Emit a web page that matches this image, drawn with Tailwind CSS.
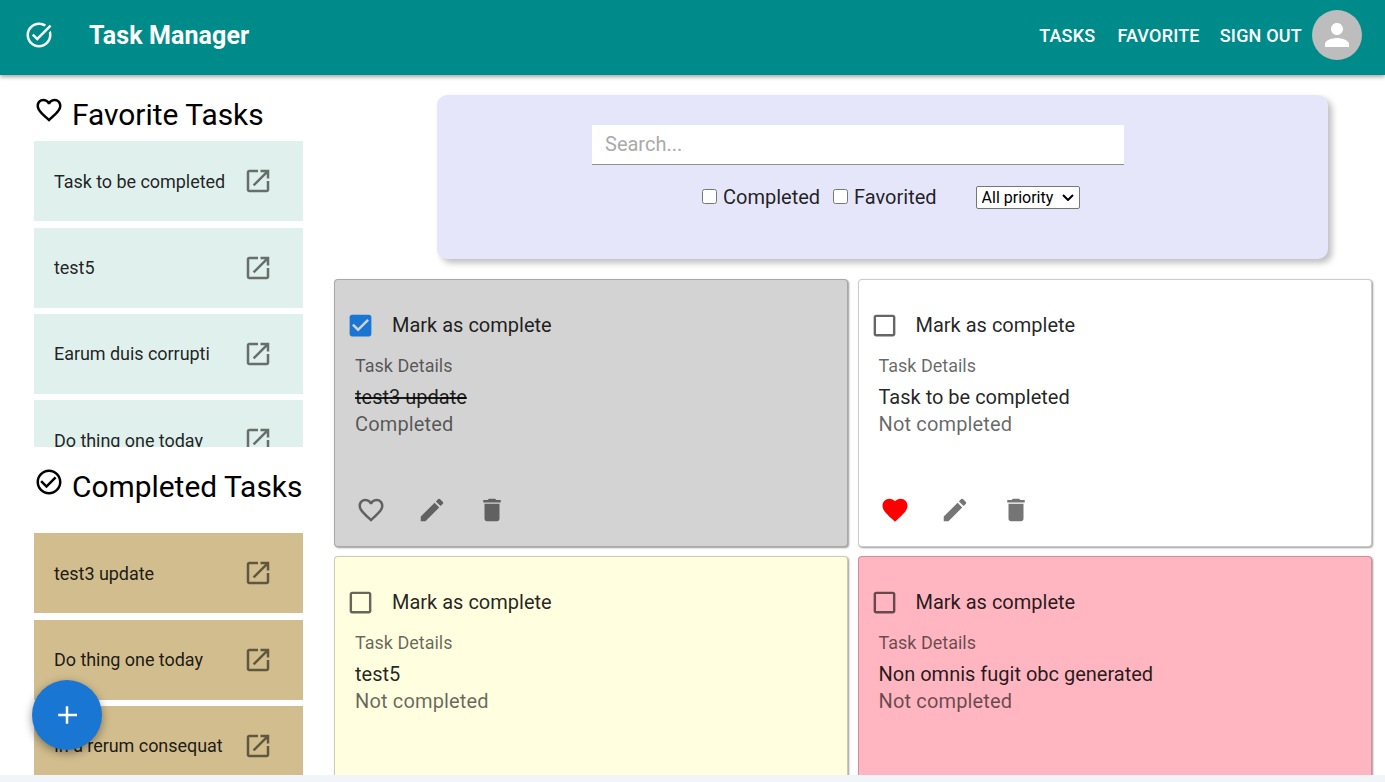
<!DOCTYPE html>
<html lang="en">
<head>
<meta charset="UTF-8">
<meta name="viewport" content="width=device-width, initial-scale=1.0">
<title>Task Manager</title>
<script src="https://cdn.jsdelivr.net/npm/@tailwindcss/browser@4"></script>
</head>
<body class="h-[782px] overflow-hidden bg-[#f1f4f9] font-['Roboto',sans-serif] text-black/87">

<!-- top bar -->
<header class="relative z-10 flex h-[75px] items-center bg-[#008b8b] pb-[5px] pl-[24px] pr-[23px] text-white shadow-[0_2px_4px_rgba(0,0,0,0.35)]">
  <svg class="h-[30px] w-[30px] fill-white" viewBox="0 0 24 24"><path d="M22 5.18 10.59 16.6l-4.24-4.24 1.41-1.41 2.83 2.83 10-10L22 5.18zm-2.21 5.04c.13.57.21 1.17.21 1.78 0 4.42-3.58 8-8 8s-8-3.58-8-8 3.58-8 8-8c1.58 0 3.04.46 4.28 1.25l1.44-1.44C16.1 2.67 14.13 2 12 2 6.48 2 2 6.48 2 12s4.48 10 10 10 10-4.48 10-10c0-1.19-.22-2.33-.6-3.39l-1.61 1.61z"/></svg>
  <h1 class="ml-[35px] mt-[2px] text-[25px] font-bold tracking-[0.1px]">Task Manager</h1>
  <nav class="ml-auto flex items-center text-[18px] font-medium uppercase tracking-[0.2px]">
    <a href="#">Tasks</a>
    <a href="#" class="ml-[22px]">Favorite</a>
    <a href="#" class="ml-[20px]">Sign out</a>
    <div class="ml-[10px] flex h-[50px] w-[50px] items-center justify-center rounded-full bg-[#bdbdbd]">
      <svg class="h-[36px] w-[36px] fill-white" viewBox="0 0 24 24"><path d="M12 12c2.21 0 4-1.79 4-4s-1.79-4-4-4-4 1.79-4 4 1.79 4 4 4zm0 2c-2.67 0-8 1.34-8 4v2h16v-2c0-2.66-5.33-4-8-4z"/></svg>
    </div>
  </nav>
</header>

<div class="flex h-[700px] overflow-hidden bg-white">
  <!-- sidebar -->
  <aside class="ml-[34px] w-[269px] shrink-0 pt-[20px]">
    <div class="flex h-[46.2px] items-start">
      <svg class="h-[30px] w-[30px] shrink-0 fill-black" viewBox="0 0 24 24"><path d="M16.5 3c-1.74 0-3.41.81-4.5 2.09C10.91 3.81 9.24 3 7.5 3 4.42 3 2 5.42 2 8.5c0 3.78 3.4 6.86 8.55 11.54L12 21.35l1.45-1.32C18.6 15.36 22 12.28 22 8.5 22 5.42 19.58 3 16.5 3zm-4.4 15.55-.1.1-.1-.1C7.14 14.24 4 11.39 4 8.5 4 6.5 5.5 5 7.5 5c1.54 0 3.04.99 3.57 2.36h1.87C13.46 5.99 14.96 5 16.5 5c2 0 3.5 1.5 3.5 3.5 0 2.89-3.14 5.74-7.9 10.05z"/></svg>
      <h2 class="ml-[8px] whitespace-nowrap text-[29.9px] leading-[40px] text-black">Favorite Tasks</h2>
    </div>
    <div class="flex h-[306px] flex-col gap-[6.4px] overflow-hidden tracking-[-0.05px]">
      <div class="flex h-[80px] shrink-0 items-center justify-between bg-[#e0f0ec] pl-[20px] pr-[30px] text-[18px]">
        <span>Task to be completed</span>
        <svg class="h-[30px] w-[30px] shrink-0 fill-black/54" viewBox="0 0 24 24"><path d="M19 19H5V5h7V3H5c-1.11 0-2 .9-2 2v14c0 1.1.89 2 2 2h14c1.1 0 2-.9 2-2v-7h-2v7zM14 3v2h3.59l-9.83 9.83 1.41 1.41L19 6.41V10h2V3h-7z"/></svg>
      </div>
      <div class="flex h-[80px] shrink-0 items-center justify-between bg-[#e0f0ec] pl-[20px] pr-[30px] text-[18px]">
        <span>test5</span>
        <svg class="h-[30px] w-[30px] shrink-0 fill-black/54" viewBox="0 0 24 24"><path d="M19 19H5V5h7V3H5c-1.11 0-2 .9-2 2v14c0 1.1.89 2 2 2h14c1.1 0 2-.9 2-2v-7h-2v7zM14 3v2h3.59l-9.83 9.83 1.41 1.41L19 6.41V10h2V3h-7z"/></svg>
      </div>
      <div class="flex h-[80px] shrink-0 items-center justify-between bg-[#e0f0ec] pl-[20px] pr-[30px] text-[18px]">
        <span>Earum duis corrupti</span>
        <svg class="h-[30px] w-[30px] shrink-0 fill-black/54" viewBox="0 0 24 24"><path d="M19 19H5V5h7V3H5c-1.11 0-2 .9-2 2v14c0 1.1.89 2 2 2h14c1.1 0 2-.9 2-2v-7h-2v7zM14 3v2h3.59l-9.83 9.83 1.41 1.41L19 6.41V10h2V3h-7z"/></svg>
      </div>
      <div class="flex h-[80px] shrink-0 items-center justify-between bg-[#e0f0ec] pl-[20px] pr-[30px] text-[18px]">
        <span>Do thing one today</span>
        <svg class="h-[30px] w-[30px] shrink-0 fill-black/54" viewBox="0 0 24 24"><path d="M19 19H5V5h7V3H5c-1.11 0-2 .9-2 2v14c0 1.1.89 2 2 2h14c1.1 0 2-.9 2-2v-7h-2v7zM14 3v2h3.59l-9.83 9.83 1.41 1.41L19 6.41V10h2V3h-7z"/></svg>
      </div>
    </div>

    <div class="mt-[20px] flex h-[66px] items-start">
      <svg class="h-[30px] w-[30px] shrink-0 fill-black" viewBox="0 0 24 24"><path d="M16.59 7.58 10 14.17l-3.59-3.58L5 12l5 5 8-8zM12 2C6.48 2 2 6.48 2 12s4.48 10 10 10 10-4.48 10-10S17.52 2 12 2zm0 18c-4.42 0-8-3.58-8-8s3.58-8 8-8 8 3.58 8 8-3.58 8-8 8z"/></svg>
      <h2 class="ml-[8px] whitespace-nowrap text-[29.9px] leading-[40px] text-black">Completed Tasks</h2>
    </div>
    <div class="flex flex-col gap-[6.4px] tracking-[-0.05px]">
      <div class="flex h-[80px] shrink-0 items-center justify-between bg-[#d2bd8e] pl-[20px] pr-[30px] text-[18px]">
        <span>test3 update</span>
        <svg class="h-[30px] w-[30px] shrink-0 fill-black/54" viewBox="0 0 24 24"><path d="M19 19H5V5h7V3H5c-1.11 0-2 .9-2 2v14c0 1.1.89 2 2 2h14c1.1 0 2-.9 2-2v-7h-2v7zM14 3v2h3.59l-9.83 9.83 1.41 1.41L19 6.41V10h2V3h-7z"/></svg>
      </div>
      <div class="flex h-[80px] shrink-0 items-center justify-between bg-[#d2bd8e] pl-[20px] pr-[30px] text-[18px]">
        <span>Do thing one today</span>
        <svg class="h-[30px] w-[30px] shrink-0 fill-black/54" viewBox="0 0 24 24"><path d="M19 19H5V5h7V3H5c-1.11 0-2 .9-2 2v14c0 1.1.89 2 2 2h14c1.1 0 2-.9 2-2v-7h-2v7zM14 3v2h3.59l-9.83 9.83 1.41 1.41L19 6.41V10h2V3h-7z"/></svg>
      </div>
      <div class="flex h-[80px] shrink-0 items-center justify-between bg-[#d2bd8e] pl-[20px] pr-[30px] text-[18px]">
        <span>In a rerum consequat</span>
        <svg class="h-[30px] w-[30px] shrink-0 fill-black/54" viewBox="0 0 24 24"><path d="M19 19H5V5h7V3H5c-1.11 0-2 .9-2 2v14c0 1.1.89 2 2 2h14c1.1 0 2-.9 2-2v-7h-2v7zM14 3v2h3.59l-9.83 9.83 1.41 1.41L19 6.41V10h2V3h-7z"/></svg>
      </div>
    </div>
  </aside>

  <main class="ml-[31px] w-[1039px] shrink-0 pt-[20px]">
    <!-- search and filters -->
    <section class="ml-[103px] flex h-[164px] w-[891px] flex-col items-start rounded-[10px] bg-[#e6e6fa] pt-[30px] shadow-[4px_4px_6px_rgba(0,0,0,0.25)]">
      <input type="text" placeholder="Search..." class="ml-[155px] h-[40px] w-[532px] border-b border-[#8f8f8f] bg-white px-[13px] pb-[2px] text-[20px] placeholder:text-[#aaaaaa] outline-none">
      <div class="ml-[265px] mt-[19px] flex h-[26px] items-center text-[20px]">
        <input type="checkbox" class="h-[15px] w-[15px] -translate-y-[1px]">
        <span class="ml-[6px]">Completed</span>
        <input type="checkbox" class="ml-[13px] h-[15px] w-[15px] -translate-y-[1px]">
        <span class="ml-[6px]">Favorited</span>
        <div class="relative ml-[39px] h-[23px] w-[104px]">
          <select class="block h-full w-full appearance-none rounded-[2px] border border-[#767676] bg-white pl-[5px] text-[16px] leading-[21px] text-black">
            <option>All priority</option>
          </select>
          <svg class="pointer-events-none absolute right-[6px] top-[8px] h-[7px] w-[12px] fill-none stroke-black stroke-2" viewBox="0 0 12 7"><path d="M1 1l5 5 5-5"/></svg>
        </div>
      </div>
    </section>

    <!-- task cards -->
    <div class="mt-[20px] grid grid-cols-[514px_514.5px] gap-x-[9.5px] gap-y-[9px]">
      <article class="flex h-[268px] flex-col rounded-[4px] border border-black/20 bg-[#d3d3d3] pl-[20px] pt-[21px] shadow-[1px_1px_2px_rgba(0,0,0,0.4)]">
        <div class="-ml-[9px] flex h-[48px] items-center">
          <svg class="h-[29px] w-[29px] shrink-0 fill-[#1976d2]" viewBox="0 0 24 24"><path d="M19 3H5c-1.11 0-2 .9-2 2v14c0 1.1.89 2 2 2h14c1.11 0 2-.9 2-2V5c0-1.1-.89-2-2-2zm-9 14-5-5 1.41-1.41L10 14.17l7.59-7.59L19 8l-9 9z"/></svg>
          <span class="ml-[17px] text-[20px]">Mark as complete</span>
        </div>
        <p class="mt-[4px] text-[18px] leading-[26px] text-black/60">Task Details</p>
        <p class="mt-[5px] text-[20px] leading-[27px] line-through">test3 update</p>
        <p class="text-[20px] leading-[27px] tracking-[0.15px] text-black/60">Completed</p>
        <div class="mt-auto mb-[13px] ml-[1px] flex h-[46px] items-center gap-[30.5px]">
          <svg class="h-[30px] w-[30px] fill-black/54" viewBox="0 0 24 24"><path d="M16.5 3c-1.74 0-3.41.81-4.5 2.09C10.91 3.81 9.24 3 7.5 3 4.42 3 2 5.42 2 8.5c0 3.78 3.4 6.86 8.55 11.54L12 21.35l1.45-1.32C18.6 15.36 22 12.28 22 8.5 22 5.42 19.58 3 16.5 3zm-4.4 15.55-.1.1-.1-.1C7.14 14.24 4 11.39 4 8.5 4 6.5 5.5 5 7.5 5c1.54 0 3.04.99 3.57 2.36h1.87C13.46 5.99 14.96 5 16.5 5c2 0 3.5 1.5 3.5 3.5 0 2.89-3.14 5.74-7.9 10.05z"/></svg>
          <svg class="h-[30px] w-[30px] fill-black/54" viewBox="0 0 24 24"><path d="M3 17.25V21h3.75L17.81 9.94l-3.75-3.75L3 17.25zM20.71 7.04c.39-.39.39-1.02 0-1.41l-2.34-2.34a.9959.9959 0 0 0-1.41 0l-1.83 1.83 3.75 3.75 1.83-1.83z"/></svg>
          <svg class="h-[30px] w-[30px] fill-black/54" viewBox="0 0 24 24"><path d="M6 19c0 1.1.9 2 2 2h8c1.1 0 2-.9 2-2V7H6v12zM19 4h-3.5l-1-1h-5l-1 1H5v2h14V4z"/></svg>
        </div>
      </article>

      <article class="flex h-[268px] flex-col rounded-[4px] border border-black/20 bg-white pl-[20px] pt-[21px] shadow-[1px_1px_2px_rgba(0,0,0,0.4)]">
        <div class="-ml-[9px] flex h-[48px] items-center">
          <svg class="h-[29px] w-[29px] shrink-0 fill-black/60" viewBox="0 0 24 24"><path d="M19 5v14H5V5h14m0-2H5c-1.1 0-2 .9-2 2v14c0 1.1.9 2 2 2h14c1.1 0 2-.9 2-2V5c0-1.1-.9-2-2-2z"/></svg>
          <span class="ml-[17px] text-[20px]">Mark as complete</span>
        </div>
        <p class="mt-[4px] text-[18px] leading-[26px] text-black/60">Task Details</p>
        <p class="mt-[5px] text-[20px] leading-[27px]">Task to be completed</p>
        <p class="text-[20px] leading-[27px] tracking-[0.15px] text-black/60">Not completed</p>
        <div class="mt-auto mb-[13px] ml-[1px] flex h-[46px] items-center gap-[30.5px]">
          <svg class="h-[30px] w-[30px] fill-[#ff0000]" viewBox="0 0 24 24"><path d="m12 21.35-1.45-1.32C5.4 15.36 2 12.28 2 8.5 2 5.42 4.42 3 7.5 3c1.74 0 3.41.81 4.5 2.09C13.09 3.81 14.76 3 16.5 3 19.58 3 22 5.42 22 8.5c0 3.78-3.4 6.86-8.55 11.54L12 21.35z"/></svg>
          <svg class="h-[30px] w-[30px] fill-black/54" viewBox="0 0 24 24"><path d="M3 17.25V21h3.75L17.81 9.94l-3.75-3.75L3 17.25zM20.71 7.04c.39-.39.39-1.02 0-1.41l-2.34-2.34a.9959.9959 0 0 0-1.41 0l-1.83 1.83 3.75 3.75 1.83-1.83z"/></svg>
          <svg class="h-[30px] w-[30px] fill-black/54" viewBox="0 0 24 24"><path d="M6 19c0 1.1.9 2 2 2h8c1.1 0 2-.9 2-2V7H6v12zM19 4h-3.5l-1-1h-5l-1 1H5v2h14V4z"/></svg>
        </div>
      </article>

      <article class="flex h-[268px] flex-col rounded-[4px] border border-black/20 bg-[#ffffe0] pl-[20px] pt-[21px] shadow-[1px_1px_2px_rgba(0,0,0,0.4)]">
        <div class="-ml-[9px] flex h-[48px] items-center">
          <svg class="h-[29px] w-[29px] shrink-0 fill-black/60" viewBox="0 0 24 24"><path d="M19 5v14H5V5h14m0-2H5c-1.1 0-2 .9-2 2v14c0 1.1.9 2 2 2h14c1.1 0 2-.9 2-2V5c0-1.1-.9-2-2-2z"/></svg>
          <span class="ml-[17px] text-[20px]">Mark as complete</span>
        </div>
        <p class="mt-[4px] text-[18px] leading-[26px] text-black/60">Task Details</p>
        <p class="mt-[5px] text-[20px] leading-[27px]">test5</p>
        <p class="text-[20px] leading-[27px] tracking-[0.15px] text-black/60">Not completed</p>
      </article>

      <article class="flex h-[268px] flex-col rounded-[4px] border border-black/20 bg-[#ffb6c1] pl-[20px] pt-[21px] shadow-[1px_1px_2px_rgba(0,0,0,0.4)]">
        <div class="-ml-[9px] flex h-[48px] items-center">
          <svg class="h-[29px] w-[29px] shrink-0 fill-black/60" viewBox="0 0 24 24"><path d="M19 5v14H5V5h14m0-2H5c-1.1 0-2 .9-2 2v14c0 1.1.9 2 2 2h14c1.1 0 2-.9 2-2V5c0-1.1-.9-2-2-2z"/></svg>
          <span class="ml-[17px] text-[20px]">Mark as complete</span>
        </div>
        <p class="mt-[4px] text-[18px] leading-[26px] text-black/60">Task Details</p>
        <p class="mt-[5px] text-[20px] leading-[27px]">Non omnis fugit obc generated</p>
        <p class="text-[20px] leading-[27px] tracking-[0.15px] text-black/60">Not completed</p>
      </article>
    </div>
  </main>
</div>

<!-- add task button -->
<button class="fixed left-[32px] top-[680px] z-20 flex h-[70px] w-[70px] items-center justify-center rounded-full bg-[#1976d2] shadow-[0_3px_10px_rgba(0,0,0,0.4)]">
  <svg class="h-[30px] w-[30px] fill-white" viewBox="0 0 24 24"><path d="M19 13h-6v6h-2v-6H5v-2h6V5h2v6h7v2z"/></svg>
</button>

</body>
</html>
